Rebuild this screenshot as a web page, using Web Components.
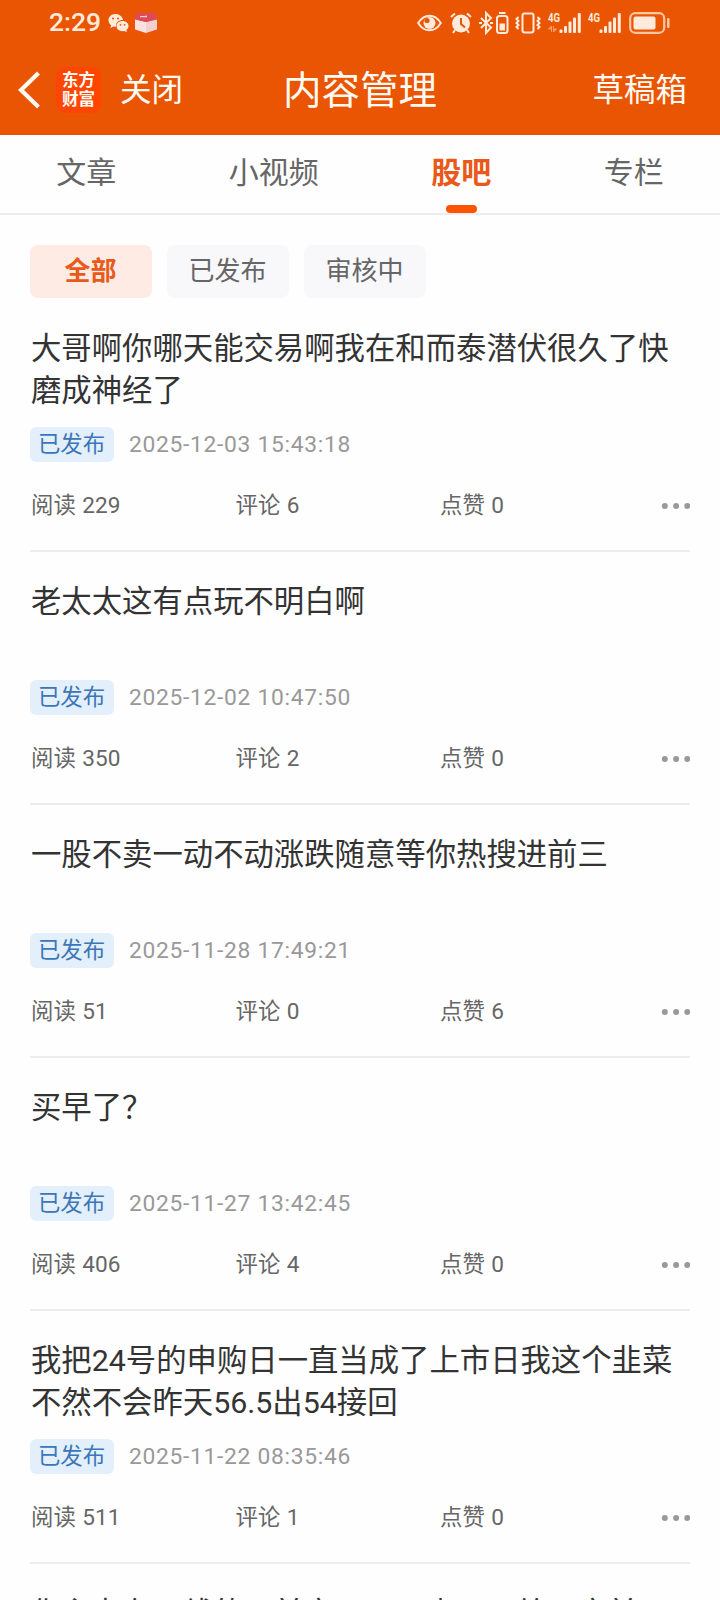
<!DOCTYPE html>
<html lang="zh-CN">
<head>
<meta charset="utf-8">
<title>内容管理</title>
<style>
	html,body{ margin:0px; padding:0px; }
	body{ width:720px; height:1600px; overflow:hidden; background-color:#fefefe; font-family:Roboto, "Noto Sans CJK SC", sans-serif; }
</style>
</head>
<body>
<content-page></content-page>

<script>
//######################################################################################
// Shared base, clones the static template of the class into an open shadow root
class BaseElement extends HTMLElement{
	constructor(){
		super();
		this.attachShadow( { mode:"open" } );
		this.shadowRoot.appendChild( this.constructor.Template.content.cloneNode( true ) );
	}

	find( sel ){ return this.shadowRoot.querySelector( sel ); }
}

function html( txt ){
	const t = document.createElement( "template" );
	t.innerHTML = txt;
	return t;
}

//######################################################################################
class StatusBar extends BaseElement{}
StatusBar.Template = html( `<style>
	:host{ display:flex; height:45px; align-items:center; color:#ffeadc; }
	svg{ display:block; flex:none; overflow:visible; }
	.time{ width:58px; margin-left:49px; font-size:26.500px; line-height:43px; padding-bottom:2px; font-weight:500; }
	.right{ display:flex; align-items:center; margin-left:auto; margin-right:50px; }
	text{ font-family:Roboto, sans-serif; font-weight:700; font-size:12px; }
</style>
<div class="time">2:29</div>
<svg width="22" height="20" viewBox="0 0 22 20" fill="currentColor">
	<path d="M8.500 1C4 1 1.500 4 1.500 7.300c0 2 1 3.700 2.600 4.900L3.500 15l3-1.500 2.500.3C8.600 9.500 11.800 6.800 16 7 15.400 3.400 12.300 1 8.500 1z"/>
	<path d="M15.500 8c-3.500 0-6 2.200-6 5.100s2.500 5.100 6 5.100l2-.3 2.500 1.300-.6-2.200c1.300-.9 2.100-2.300 2.100-3.900C21.500 10.200 19 8 15.500 8z"/>
	<g fill="#e95502"><circle cx="6" cy="5.500" r="1"/><circle cx="11" cy="5.500" r="1"/><circle cx="13.500" cy="11.800" r=".9"/><circle cx="17.600" cy="11.800" r=".9"/></g>
</svg>
<svg width="22" height="20" viewBox="0 0 22 20" style="margin-left:6px">
	<path d="M0 6l11 3v11L0 16.500z" fill="#fbe2e2"/>
	<path d="M22 6L11 9v11l11-3.500z" fill="#f3cfd0"/>
	<path d="M2.500 0h17q1 0 1.300 1L22 6.500 11 9 0 6.500 1.200 1Q1.500 0 2.500 0z" fill="#de4a57"/>
	<path d="M5 3.700h7l-1.200-1.200" fill="none" stroke="#ffe9e7"/>
</svg>
<div class="right">
	<svg width="25" height="18" viewBox="0 0 25 18">
		<path d="M1.200 9C7-.8 18-.8 23.800 9 18 18.800 7 18.800 1.200 9z" fill="none" stroke="currentColor" stroke-width="2"/>
		<circle cx="12.500" cy="9" r="6" fill="currentColor"/><circle cx="10" cy="6.500" r="2.600" fill="#e95502"/>
	</svg>
	<svg width="22" height="22" viewBox="0 0 22 22" style="margin-left:8px" fill="none" stroke="currentColor" stroke-width="2">
		<circle cx="11" cy="11.500" r="9" fill="currentColor" stroke="none"/>
		<path d="M1 5l4-3.600M21 5l-4-3.600M5 18l-2 3M17 18l2 3"/>
		<path d="M11 6v6l4 3.500" stroke="#e95502"/>
	</svg>
	<svg width="30" height="22" viewBox="0 0 30 22" style="margin-left:7px" fill="none" stroke="currentColor" stroke-width="2">
		<path d="M2 6l10 9.500-5 5.500V1l5 5L2 16"/>
		<path d="M0 11h3M11 11h3" stroke-width="2"/>
		<rect x="18" y="4" width="10.500" height="17" rx="2.500"/>
		<path d="M20 1h6.500"/>
		<path d="M20.500 11.500h5.500v7h-5.500z" fill="currentColor" stroke="none"/>
	</svg>
	<svg width="26" height="22" viewBox="0 0 26 22" style="margin-left:6px" fill="none" stroke="currentColor" stroke-width="2">
		<rect x="7.500" y="1.500" width="11" height="19" rx="2"/>
		<path d="M3.500 5L1.500 7 3.500 9 1.500 11 3.500 13 1.500 15 3.500 17M22.500 5l2 2-2 2 2 2-2 2 2 2-2 2" stroke-width="2"/>
	</svg>
	<svg width="33" height="22" viewBox="0 0 33 22" style="margin-left:7px" fill="currentColor">
		<text x="0" y="9.500" textLength="12" lengthAdjust="spacingAndGlyphs">4G</text>
		<path d="M3.500 20v-6l-3 3h3zM5.500 14v6l3-3h-3z" fill="#ff9b63" stroke="#ff9b63" stroke-width="1"/>
		<rect x="11.500" y="17.500" width="3" height="3.500" rx="1"/><rect x="16" y="14" width="3" height="7" rx="1"/><rect x="20.500" y="9.500" width="3" height="11.500" rx="1"/><rect x="25" y="5.500" width="3" height="15.500" rx="1"/><rect x="29.800" y="1" width="3" height="20" rx="1"/>
	</svg>
	<svg width="33" height="22" viewBox="0 0 33 22" style="margin-left:7px" fill="currentColor">
		<text x="0" y="9.500" textLength="12" lengthAdjust="spacingAndGlyphs">4G</text>
		<rect x="11.500" y="17.500" width="3" height="3.500" rx="1"/><rect x="16" y="14" width="3" height="7" rx="1"/><rect x="20.500" y="9.500" width="3" height="11.500" rx="1"/><rect x="25" y="5.500" width="3" height="15.500" rx="1"/><rect x="29.800" y="1" width="3" height="20" rx="1"/>
	</svg>
	<svg width="41" height="22" viewBox="0 0 41 22" style="margin-left:8px" fill="currentColor">
		<rect x="1.200" y="1.200" width="34" height="19.600" rx="5" fill="none" stroke="#ffc6a3" stroke-width="2.200"/>
		<rect x="4.500" y="4.500" width="22" height="13" rx="2"/>
		<rect x="38" y="6" width="2.500" height="10" rx="1" fill="#ffc6a3"/>
	</svg>
</div>` );
customElements.define( "status-bar", StatusBar );

//######################################################################################
class NavBar extends BaseElement{}
NavBar.Template = html( `<style>
	:host{ display:grid; grid-template-columns:1fr auto 1fr; height:90px; align-items:center; color:#fffaf4; }
	.left{ display:flex; align-items:center; }
	.back{ width:24px; height:40px; margin-left:17px; }
	.logo{ display:flex; align-items:center; justify-content:center; box-sizing:border-box; width:45px; height:46px; padding-bottom:2px; margin-left:15px; border-radius:9px;
		background-color:#ff4600; font-family:"Noto Sans CJK SC", sans-serif; font-size:16.500px; line-height:19.500px; font-weight:700; text-align:center; }
	.link{ padding-top:2px; font-size:31.500px; line-height:46px; }
	.close{ margin-left:19px; }
	.title{ padding-top:2px; font-size:38.500px; line-height:56px; }
	.right{ text-align:right; margin-right:33px; }
</style>
<div class="left">
	<svg class="back" viewBox="0 0 24 40" fill="none" stroke="currentColor" stroke-width="4.200"><path d="M21.500 3L4 20l17.500 17"/></svg>
	<div class="logo"><span>东方<br>财富</span></div>
	<div class="link close">关闭</div>
</div>
<div class="title"><slot></slot></div>
<div class="link right">草稿箱</div>` );
customElements.define( "nav-bar", NavBar );

//######################################################################################
class TabItem extends BaseElement{}
TabItem.Template = html( `<style>
	:host{ display:flex; flex-direction:column; align-items:center; justify-content:space-between; height:78px; font-size:30px; line-height:44px; color:#666; }
	.label{ margin-top:16px; }
	.line{ width:31px; height:8px; border-radius:4px; }
	:host([active]){ color:#e8591a; font-weight:700; }
	:host([active]) .line{ background-color:#fb5405; }
</style>
<div class="label"><slot></slot></div><div class="line"></div>` );
customElements.define( "tab-item", TabItem );

//######################################################################################
class FilterChip extends BaseElement{}
FilterChip.Template = html( `<style>
	:host{ display:block; box-sizing:border-box; width:122px; height:53px; padding-right:1px; border-radius:8px; background-color:#f8f8fb; color:#666; font-size:26px; line-height:52px; text-align:center; }
	:host([active]){ background-color:#feece4; color:#e8591a; font-weight:700; }
</style><slot></slot>` );
customElements.define( "filter-chip", FilterChip );

//######################################################################################
class PostItem extends BaseElement{
	connectedCallback(){
		for( const k of [ "date", "reads", "comments", "likes" ] ){
			this.find( "." + k ).textContent = this.getAttribute( k );
		}
	}
}
PostItem.Template = html( `<style>
	:host{ display:block; box-sizing:border-box; height:253px; margin:0px 30px; padding-top:29px; border-bottom:2px solid #ededed; }
	.title{ height:84px; padding-left:1px; font-size:30.360px; line-height:42px; color:#333; }
	.meta{ display:flex; align-items:center; height:35px; margin-top:15px; }
	.tag{ box-sizing:border-box; width:84px; height:35px; padding-right:1px; border-radius:6px; background-color:#e3effb; color:#3b76b8; font-size:22.400px; line-height:35px; text-align:center; }
	.date{ margin-left:15px; font-size:22.800px; letter-spacing:0.700px; line-height:33px; color:#999; }
	.stats{ display:grid; grid-template-columns:204.500px 204.500px 1fr auto; align-items:center; height:32px; margin-top:27px; padding-left:1px; font-size:22.400px; line-height:32px; color:#666; }
	.num{ margin-left:1px; font-size:22.600px; }
	svg{ display:block; }
</style>
<div class="title"><slot></slot></div>
<div class="meta"><div class="tag">已发布</div><div class="date"></div></div>
<div class="stats">
	<div>阅读 <span class="num reads"></span></div>
	<div>评论 <span class="num comments"></span></div>
	<div>点赞 <span class="num likes"></span></div>
	<svg width="29" height="6" viewBox="0 0 29 6" fill="#999"><circle cx="3.800" cy="3" r="3"/><circle cx="15.100" cy="3" r="3"/><circle cx="26.300" cy="3" r="3"/></svg>
</div>` );
customElements.define( "post-item", PostItem );

//######################################################################################
class ContentPage extends BaseElement{}
ContentPage.Template = html( `<style>
	:host{ display:block; width:720px; height:1600px; overflow:hidden; }
	header{ height:135px; background-color:#e95502; }
	nav{ display:flex; justify-content:space-around; height:78px; border-bottom:2px solid #ededed; }
	.filters{ display:flex; gap:15px; padding:30px 30px 1px; }
</style>
<header>
	<status-bar></status-bar>
	<nav-bar>内容管理</nav-bar>
</header>
<nav>
	<tab-item>文章</tab-item>
	<tab-item>小视频</tab-item>
	<tab-item active>股吧</tab-item>
	<tab-item>专栏</tab-item>
</nav>
<div class="filters">
	<filter-chip active>全部</filter-chip>
	<filter-chip>已发布</filter-chip>
	<filter-chip>审核中</filter-chip>
</div>
<main>
	<post-item date="2025-12-03 15:43:18" reads="229" comments="6" likes="0">大哥啊你哪天能交易啊我在和而泰潜伏很久了快磨成神经了</post-item>
	<post-item date="2025-12-02 10:47:50" reads="350" comments="2" likes="0">老太太这有点玩不明白啊</post-item>
	<post-item date="2025-11-28 17:49:21" reads="51" comments="0" likes="6">一股不卖一动不动涨跌随意等你热搜进前三</post-item>
	<post-item date="2025-11-27 13:42:45" reads="406" comments="4" likes="0">买早了？</post-item>
	<post-item date="2025-11-22 08:35:46" reads="511" comments="1" likes="0">我把24号的申购日一直当成了上市日我这个韭菜不然不会昨天56.5出54接回</post-item>
	<post-item date="2025-11-21 09:30:12" reads="320" comments="3" likes="0">你主力在日线的日前市一口一少口口给口方前</post-item>
</main>` );
customElements.define( "content-page", ContentPage );
</script>
</body>
</html>
